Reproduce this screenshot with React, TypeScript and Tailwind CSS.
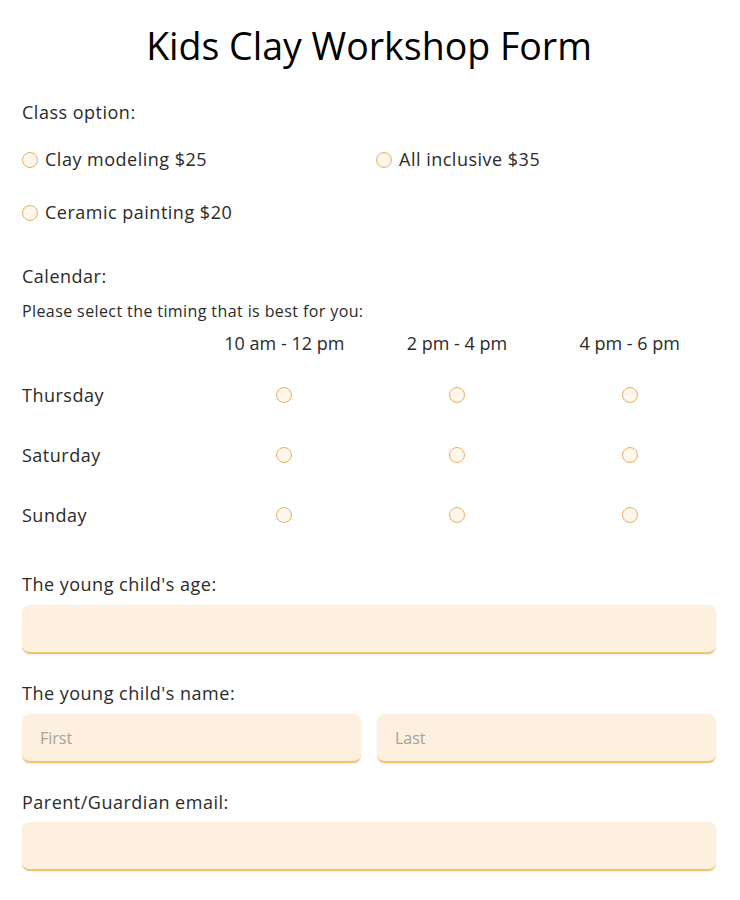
import React from 'react';

const font = { fontFamily: '"Open Sans", "Liberation Sans", sans-serif' };

const classOptions = ['Clay modeling $25', 'All inclusive $35', 'Ceramic painting $20'];
const slots = ['10 am - 12 pm', '2 pm - 4 pm', '4 pm - 6 pm'];
const days = ['Thursday', 'Saturday', 'Sunday'];

function Radio() {
    return <span className="block w-4 h-4 shrink-0 rounded-full border border-[#e6b35e] bg-[#fdf6ec]" />;
}

function Field({ placeholder }: { placeholder?: string }) {
    return (
        <div className="h-[49px] flex-1 rounded-lg bg-[#fdf0df] border-b-2 border-[#efc46f] shadow-[0_1px_2px_rgba(0,0,0,0.08)] flex items-center px-[18px] text-[16px] text-[#a7a29b]">
            {placeholder}
        </div>
    );
}

export default function App() {
    return (
        <div className="min-h-screen bg-white text-[#2a2a2a]" style={font}>
            <div className="pl-[22px] pr-[24px] pt-[22px]">
                <h1 className="text-center text-[37.5px] leading-[48px] text-black font-normal">Kids Clay Workshop Form</h1>

                {/* Class option */}
                <p className="mt-[30px] text-[18px] tracking-[0.5px] leading-[24px]">Class option:</p>
                <div className="mt-[9px] grid grid-cols-[354px_1fr]">
                    {classOptions.map((opt) => (
                        <label key={opt} className="h-[53px] flex items-center gap-[7px] text-[18px] tracking-[0.5px]">
                            <Radio />
                            <span>{opt}</span>
                        </label>
                    ))}
                </div>

                {/* Calendar */}
                <p className="mt-[25px] text-[18px] tracking-[0.5px] leading-[24px]">Calendar:</p>
                <p className="mt-[12px] text-[16px] tracking-[0.4px] leading-[22px]">Please select the timing that is best for you:</p>
                <div className="mt-[8px] grid grid-cols-[176px_1fr_1fr_1fr]">
                    <div />
                    {slots.map((s) => (
                        <div key={s} className="text-center text-[18px] leading-[26px]">{s}</div>
                    ))}
                </div>
                <div className="mt-[9px]">
                    {days.map((d) => (
                        <div key={d} className="grid grid-cols-[176px_1fr_1fr_1fr] h-[60px] items-center">
                            <span className="text-[18px] tracking-[0.5px]">{d}</span>
                            {slots.map((s) => (
                                <div key={s} className="flex justify-center">
                                    <Radio />
                                </div>
                            ))}
                        </div>
                    ))}
                </div>

                {/* Age */}
                <p className="mt-[27px] text-[18px] tracking-[0.5px] leading-[24px]">The young child's age:</p>
                <div className="mt-[9px] flex">
                    <Field />
                </div>

                {/* Name */}
                <p className="mt-[27px] text-[18px] tracking-[0.5px] leading-[24px]">The young child's name:</p>
                <div className="mt-[9px] flex gap-4">
                    <Field placeholder="First" />
                    <Field placeholder="Last" />
                </div>

                {/* Email */}
                <p className="mt-[27px] text-[18px] tracking-[0.5px] leading-[24px]">Parent/Guardian email:</p>
                <div className="mt-[8px] flex">
                    <Field />
                </div>

                <p className="mt-[24px] text-[18px] tracking-[0.5px] leading-[24px]">Parent/Guardian phone:</p>
                <div className="mt-[8px] flex">
                    <Field />
                </div>
            </div>
        </div>
    );
}
